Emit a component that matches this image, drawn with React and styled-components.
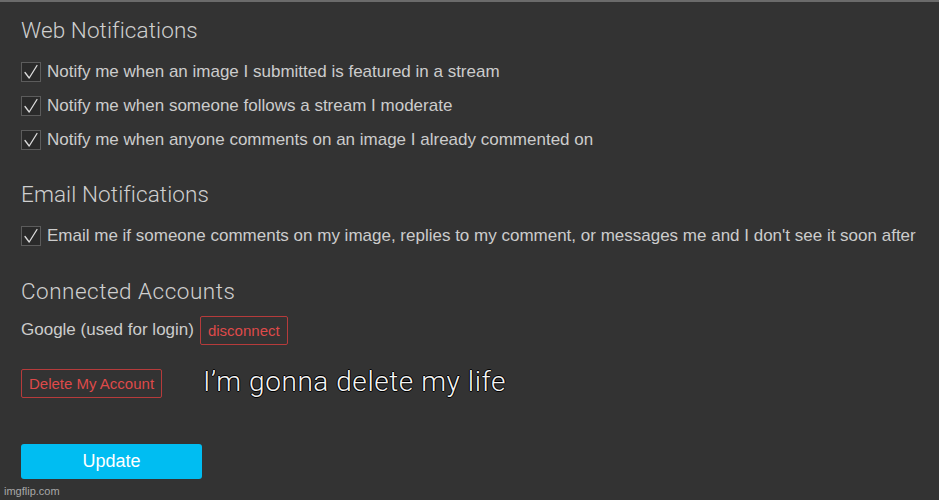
import React from "react";
import styled, { createGlobalStyle } from "styled-components";

const Global = createGlobalStyle`
  html, body { margin: 0; padding: 0; background: #333333; }
  body { font-family: "Liberation Sans", Arial, sans-serif; }
`;

const Page = styled.div`
  position: relative;
  width: 939px;
  height: 500px;
  box-sizing: border-box;
  background: #333333;
  border-top: 2px solid #6b6b6b;
  padding: 15px 0 0 21px;
  display: flex;
  flex-direction: column;
  overflow: hidden;
`;

const Heading = styled.h2`
  margin: ${(p) => p.$top || 0}px 0 12px 0;
  font-family: Roboto, "Liberation Sans", sans-serif;
  font-weight: 300;
  font-size: 22.5px;
  line-height: 26px;
  height: 26px;
  color: #cfcfcf;
  letter-spacing: ${(p) => p.$ls || 0.1}px;
`;

const Row = styled.label`
  display: flex;
  align-items: center;
  gap: 6px;
  height: 34px;
  font-size: 17px;
  color: #cccccc;
`;

const Box = styled.span`
  width: 20px;
  height: 20px;
  box-sizing: border-box;
  border: 1.5px solid #5c5c5c;
  background: #2a2a2a;
  display: flex;
  align-items: center;
  justify-content: center;
  flex: none;
`;

const AccountRow = styled.div`
  display: flex;
  align-items: center;
  gap: 6px;
  height: 30px;
  font-size: 17px;
  color: #cccccc;
  margin-top: ${(p) => p.$top || 0}px;
`;

const DangerButton = styled.button`
  height: 29px;
  box-sizing: border-box;
  padding: 0 7px;
  background: transparent;
  border: 1.5px solid #b63b3b;
  border-radius: 2px;
  color: #de4a4a;
  font-family: "Liberation Sans", Arial, sans-serif;
  font-size: 15px;
`;

const Caption = styled.span`
  margin-left: 35px;
  margin-top: -4px;
  font-family: Roboto, "Liberation Sans", sans-serif;
  font-weight: 300;
  font-size: 28px;
  color: #f4f4f4;
  text-shadow: 1px 0 0 #000, -1px 0 0 #000, 0 1px 0 #000, 0 -1px 0 #000;
  letter-spacing: 0.55px;
`;

const UpdateButton = styled.button`
  margin-top: 46px;
  width: 181px;
  height: 35px;
  border: none;
  border-radius: 3px;
  background: #00bdf2;
  color: #ffffff;
  font-family: "Liberation Sans", Arial, sans-serif;
  font-size: 18px;
`;

const Watermark = styled.span`
  position: absolute;
  left: 4px;
  bottom: 3px;
  font-size: 11px;
  color: #a8a8a8;
`;

const Check = () => (
  <Box>
    <svg width="16" height="16" viewBox="0 0 16 16">
      <path d="M2 8.5 L6.2 14 L14 1.5" fill="none" stroke="#dcdcdc" strokeWidth="1.3" strokeLinecap="round" strokeLinejoin="round" />
    </svg>
  </Box>
);

const CheckRow = ({ children }) => (
  <Row>
    <Check />
    <span>{children}</span>
  </Row>
);

export default function App() {
  return (
    <>
      <Global />
      <Page>
        <Heading>Web Notifications</Heading>
        <CheckRow>Notify me when an image I submitted is featured in a stream</CheckRow>
        <CheckRow>Notify me when someone follows a stream I moderate</CheckRow>
        <CheckRow>Notify me when anyone comments on an image I already commented on</CheckRow>
        <Heading $top={24} $ls={0}>Email Notifications</Heading>
        <CheckRow>Email me if someone comments on my image, replies to my comment, or messages me and I don't see it soon after</CheckRow>
        <Heading $top={25} $ls={0.5}>Connected Accounts</Heading>
        <AccountRow $top={-1}>
          <span>Google (used for login)</span>
          <DangerButton>disconnect</DangerButton>
        </AccountRow>
        <AccountRow $top={23}>
          <DangerButton>Delete My Account</DangerButton>
          <Caption>I’m gonna delete my life</Caption>
        </AccountRow>
        <UpdateButton>Update</UpdateButton>
        <Watermark>imgflip.com</Watermark>
      </Page>
    </>
  );
}
